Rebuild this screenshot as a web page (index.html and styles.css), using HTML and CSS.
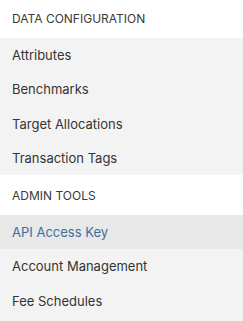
FILE: index.html
```html
<!DOCTYPE html>
<html lang="en">
<head>
    <meta charset="UTF-8">
    <meta name="viewport" content="width=device-width, initial-scale=1.0">
    <title>Settings</title>
    <link rel="stylesheet" href="styles.css">
</head>
<body>

<nav class="settings-nav">
    <!-- Data configuration -->
    <div class="nav-section">
        <div class="nav-heading first">DATA CONFIGURATION</div>
        <ul class="nav-list">
            <li><a href="#">Attributes</a></li>
            <li><a href="#">Benchmarks</a></li>
            <li><a href="#">Target Allocations</a></li>
            <li><a href="#">Transaction Tags</a></li>
        </ul>
    </div>

    <!-- Admin tools -->
    <div class="nav-section">
        <div class="nav-heading">ADMIN TOOLS</div>
        <ul class="nav-list">
            <li class="active"><a href="#">API Access Key</a></li>
            <li><a href="#">Account Management</a></li>
            <li><a href="#">Fee Schedules</a></li>
        </ul>
    </div>
</nav>

</body>
</html>
```

FILE: styles.css
```css
body {
    margin: 0;
    font-family: Inter, "Noto Sans", sans-serif;
    background-color: #f3f3f3;
    color: #333;
}
.nav-heading {
    display: flex;
    align-items: center;
    height: 40px;
    padding: 0 12px;
    background-color: #fff;
    font-size: 12px;
    color: #3a3a3a;
}
.nav-heading.first {
    height: 38px;
    padding-bottom: 2px;
    box-sizing: border-box;
}
.nav-list {
    list-style: none;
    margin: 0;
    padding: 0;
    background-color: #f3f3f3;
}
.nav-list li a {
    display: flex;
    align-items: center;
    height: 34.25px;
    padding: 0 12px;
    font-size: 13px;
    color: #333;
    text-decoration: none;
}
.nav-list li.active a {
    background-color: #e8e8e8;
    color: #3b6ea0;
}
```
